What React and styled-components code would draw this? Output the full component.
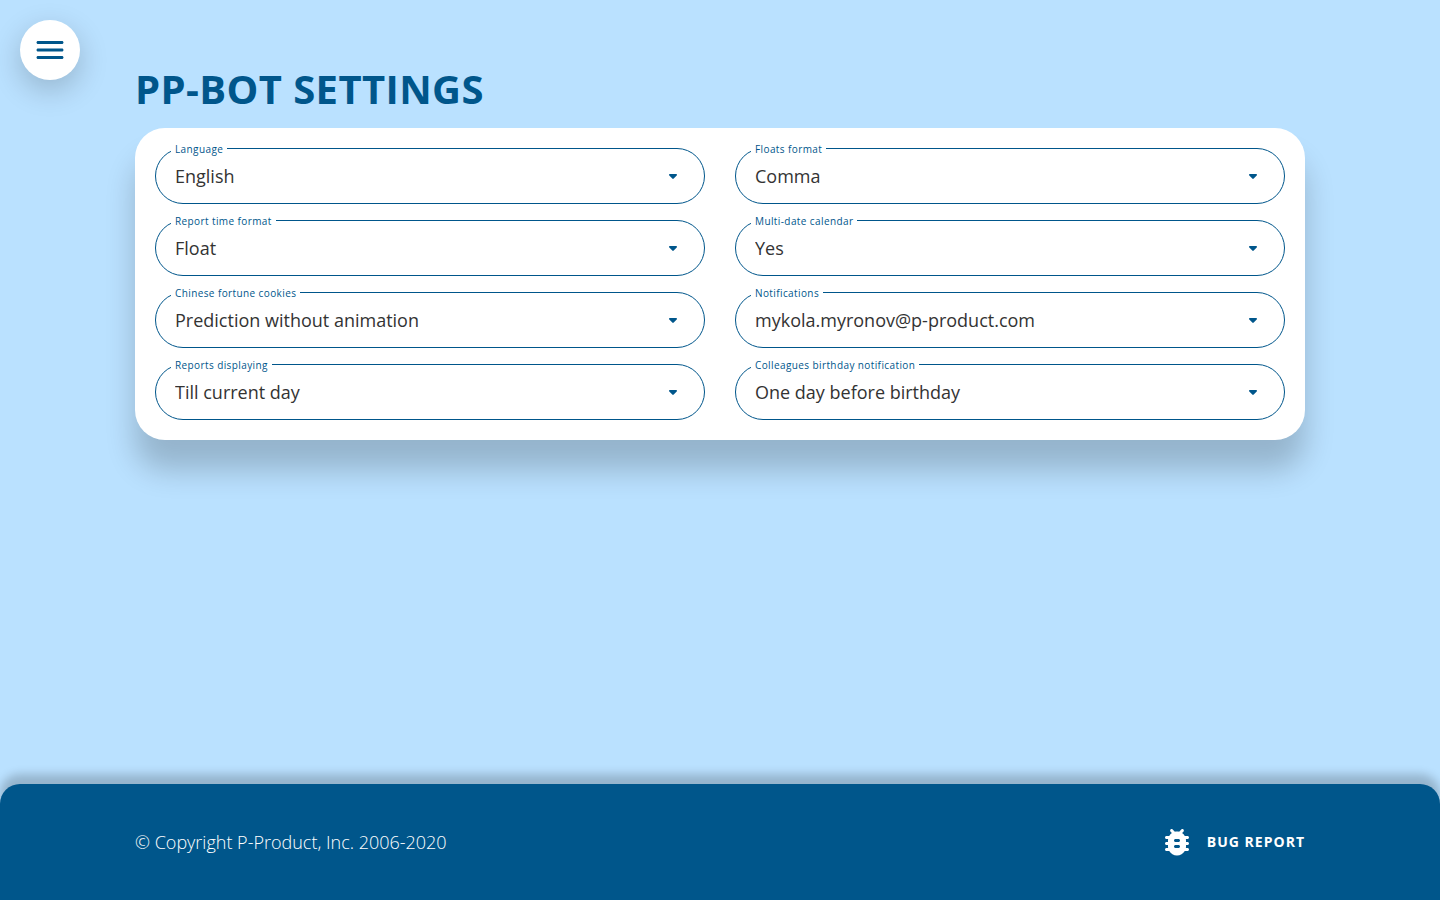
import React, { useState } from 'react'
import styled, { createGlobalStyle } from 'styled-components'

const GlobalStyle = createGlobalStyle`
    *{
        box-sizing: border-box;
    }

    body{
        margin: 0;
        background-color: #bae1ff;
        font-family: "Open Sans", "Noto Sans", sans-serif;
    }
`

const Page = styled.div`
    min-height: 100vh;
    display: flex;
    flex-direction: column;
`

const MenuButton = styled.button`
    position: fixed;
    top: 20px;
    left: 20px;
    width: 60px;
    height: 60px;
    padding: 12px;
    border: none;
    border-radius: 50%;
    background-color: #fff;
    color: #00568b;
    box-shadow: 0 10px 30px rgba(0, 0, 0, 0.2);
    cursor: pointer;
`

const Icon = styled.svg`
    display: block;
    width: 36px;
    height: 36px;
    fill: currentColor;
`

const Container = styled.div`
    width: 100%;
    max-width: 1210px;
    margin: 0 auto;
    padding: 0 20px;
`

const Main = styled.main`
    flex: 1;
    padding: 62px 0 60px;
`

const Title = styled.h1`
    margin: 0 0 12px;
    color: #00568b;
    font-size: 40px;
    font-weight: 700;
    line-height: 54px;
    letter-spacing: 0.01em;
    text-transform: uppercase;
`

const Card = styled.form`
    display: grid;
    grid-template-columns: repeat(auto-fit, minmax(min(400px, 100%), 1fr));
    gap: 16px 30px;
    padding: 20px;
    border-radius: 30px;
    background-color: #fff;
    box-shadow: 0 30px 30px rgba(0, 0, 0, 0.2);
`

const Field = styled.div`
    position: relative;
    display: flex;

    label{
        position: absolute;
        top: -6px;
        left: 16px;
        padding: 0 4px;
        background-color: #fff;
        color: #00568b;
        font-size: 10px;
        line-height: 14px;
        letter-spacing: 0.04em;
    }

    select{
        width: 100%;
        height: 56px;
        padding: 0 48px 0 19px;
        border: 1px solid #00568b;
        border-radius: 28px;
        background-color: transparent;
        color: #333;
        font-family: inherit;
        font-size: 18px;
        appearance: none;
        cursor: pointer;
    }
`

const Arrow = styled.svg`
    position: absolute;
    top: 26px;
    right: 28px;
    width: 8px;
    height: 5px;
    fill: #00568b;
    pointer-events: none;
`

const Footer = styled.footer`
    padding: 40px 0;
    border-radius: 20px 20px 0 0;
    background-color: #00568b;
    color: #fff;
    box-shadow: 0 -10px 10px rgba(0, 0, 0, 0.2);
`

const FooterRow = styled(Container)`
    display: flex;
    align-items: center;
    justify-content: space-between;

    p{
        margin: 0;
        font-size: 18px;
        font-weight: 300;
        line-height: 24px;
    }
`

const BugLink = styled.a`
    display: flex;
    align-items: center;
    gap: 12px;
    color: #fff;
    font-size: 14px;
    font-weight: 700;
    line-height: 20px;
    letter-spacing: 1px;
    text-decoration: none;
    text-transform: uppercase;
`

const settings = [
    { id: 'language', label: 'Language', options: ['English', 'Ukrainian'] },
    { id: 'floats', label: 'Floats format', options: ['Comma', 'Dot'] },
    { id: 'time', label: 'Report time format', options: ['Float', 'Hours and minutes'] },
    { id: 'calendar', label: 'Multi-date calendar', options: ['Yes', 'No'] },
    { id: 'cookies', label: 'Chinese fortune cookies', options: ['Prediction without animation', 'Off'] },
    { id: 'notifications', label: 'Notifications', options: ['mykola.myronov@p-product.com', 'Off'] },
    { id: 'reports', label: 'Reports displaying', options: ['Till current day', 'Whole month'] },
    { id: 'birthday', label: 'Colleagues birthday notification', options: ['One day before birthday', 'Off'] },
]

const SettingField = (props) => {

    const { id, label, options } = props

    const [value, setValue] = useState(options[0])

    return (
        <Field>
            <select id={id} value={value} onChange={(e) => setValue(e.target.value)}>
                {options.map((e) => <option key={e}>{e}</option>)}
            </select>
            <label htmlFor={id}>{label}</label>
            <Arrow viewBox="0 0 8 5" aria-hidden="true">
                <path d="M1 0h6c.9 0 1.3 1 .7 1.6l-3 3c-.4.4-1 .4-1.4 0l-3-3C-.3 1 .1 0 1 0z" />
            </Arrow>
        </Field>
    )
}

export const App = () => {
    return (
        <Page>
            <GlobalStyle />
            <MenuButton type="button" aria-label="Menu">
                <Icon viewBox="0 0 24 24" aria-hidden="true">
                    <path d="M4 18h16c.55 0 1-.45 1-1s-.45-1-1-1H4c-.55 0-1 .45-1 1s.45 1 1 1zm0-5h16c.55 0 1-.45 1-1s-.45-1-1-1H4c-.55 0-1 .45-1 1s.45 1 1 1zM3 7c0 .55.45 1 1 1h16c.55 0 1-.45 1-1s-.45-1-1-1H4c-.55 0-1 .45-1 1z" />
                </Icon>
            </MenuButton>
            <Main>
                <Container>
                    <Title>PP-bot settings</Title>
                    <Card>
                        {settings.map((e) => <SettingField key={e.id} {...e} />)}
                    </Card>
                </Container>
            </Main>
            <Footer>
                <FooterRow>
                    <p>© Copyright P-Product, Inc. 2006-2020</p>
                    <BugLink href="#bug-report">
                        <Icon viewBox="0 0 24 24" aria-hidden="true">
                            <path d="M19 8h-1.81c-.45-.78-1.07-1.45-1.82-1.96l.93-.93c.39-.39.39-1.02 0-1.41-.39-.39-1.02-.39-1.41 0l-1.47 1.47C12.96 5.06 12.49 5 12 5s-.96.06-1.41.17L9.11 3.7c-.39-.39-1.02-.39-1.41 0-.39.39-.39 1.02 0 1.41l.92.93C7.88 6.55 7.26 7.22 6.81 8H5c-.55 0-1 .45-1 1s.45 1 1 1h1.09c-.05.33-.09.66-.09 1v1H5c-.55 0-1 .45-1 1s.45 1 1 1h1v1c0 .34.04.67.09 1H5c-.55 0-1 .45-1 1s.45 1 1 1h1.81c1.04 1.79 2.97 3 5.19 3s4.15-1.21 5.19-3H19c.55 0 1-.45 1-1s-.45-1-1-1h-1.09c.05-.33.09-.66.09-1v-1h1c.55 0 1-.45 1-1s-.45-1-1-1h-1v-1c0-.34-.04-.67-.09-1H19c.55 0 1-.45 1-1s-.45-1-1-1zm-6 8h-2c-.55 0-1-.45-1-1s.45-1 1-1h2c.55 0 1 .45 1 1s-.45 1-1 1zm0-4h-2c-.55 0-1-.45-1-1s.45-1 1-1h2c.55 0 1 .45 1 1s-.45 1-1 1z" />
                        </Icon>
                        Bug report
                    </BugLink>
                </FooterRow>
            </Footer>
        </Page>
    )
}

export default App
